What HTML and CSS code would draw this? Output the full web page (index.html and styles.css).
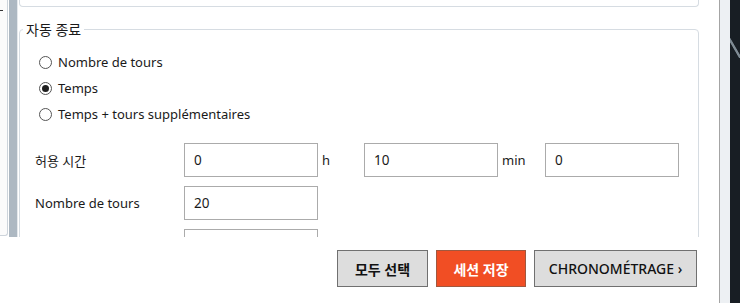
FILE: index.html
```html
<!DOCTYPE html>
<html lang="fr">
<head>
<meta charset="utf-8">
<title>Session</title>
<link rel="stylesheet" href="styles.css">
</head>
<body>
<div class="screen">
  <div class="app">
    <div class="scrollarea">
      <div class="sidepane"><span class="tick"></span></div>
      <div class="vbar"></div>
      <div class="content">
        <div class="prevbox"></div>
        <fieldset class="group">
          <legend>자동 종료</legend>
          <div class="radios">
            <label class="radio"><span class="circle"></span>Nombre de tours</label>
            <label class="radio"><span class="circle checked"></span>Temps</label>
            <label class="radio"><span class="circle"></span>Temps + tours supplémentaires</label>
          </div>
          <div class="form">
            <span class="lbl">허용 시간</span>
            <div class="cell"><input class="inp" type="text" value="0"><span class="unit">h</span></div>
            <div class="cell"><input class="inp" type="text" value="10"><span class="unit">min</span></div>
            <div class="cell"><input class="inp" type="text" value="0"></div>

            <span class="lbl">Nombre de tours</span>
            <div class="cell"><input class="inp" type="text" value="20"></div>
            <div class="cell"></div>
            <div class="cell"></div>

            <span class="lbl"></span>
            <div class="cell"><input class="inp" type="text" value=""></div>
            <div class="cell"></div>
            <div class="cell"></div>
          </div>
        </fieldset>
      </div>
    </div>
    <div class="footer">
      <button class="btn btn-gray btn-ko">모두 선택</button>
      <button class="btn btn-orange btn-ko">세션 저장</button>
      <button class="btn btn-gray btn-wide">CHRONOMÉTRAGE ›</button>
    </div>
  </div>
  <div class="divider"></div>
  <div class="strip"></div>
  <div class="dark"></div>
</div>
</body>
</html>
```

FILE: styles.css
```css
* { box-sizing: border-box; }
html, body { margin: 0; padding: 0; background: #ffffff; }
body {
  font-family: "Noto Sans", "Noto Sans CJK KR", sans-serif;
  font-size: 14px;
  color: #1a1a1a;
}
.screen {
  display: flex;
  width: 740px;
  height: 303px;
  overflow: hidden;
}
.app {
  width: 719px;
  display: flex;
  flex-direction: column;
  background: #ffffff;
}
.scrollarea {
  height: 237px;
  display: flex;
  overflow: hidden;
}
.sidepane {
  width: 8px;
  height: 236px;
  border-right: 1px solid #cdd4db;
  border-bottom: 1px solid #cdd4db;
  border-bottom-right-radius: 3px;
  background: #fbfbfb;
  padding-top: 10px;
}
.tick {
  display: block;
  width: 3px;
  height: 1px;
  background: #333;
}
.vbar {
  width: 8px;
  margin-left: 1px;
  background: #adb8c2;
}
.content {
  flex: 1;
  overflow: hidden;
  border-left: 1px solid #e4e8ec;
}
.prevbox {
  height: 7px;
  margin: 0 20px 0 1px;
  border: 1px solid #d6dce2;
  border-top: none;
  border-radius: 0 0 4px 4px;
}
.group {
  margin: 12px 20px 0 1px;
  padding: 0 0 0 3px;
  border: 1px solid #d6dce2;
  border-radius: 4px;
  min-height: 260px;
}
.group legend {
  padding: 0 3px;
  line-height: 21px;
  font-size: 14px;
}
.radios {
  margin-top: 9px;
  padding-left: 16px;
  display: flex;
  flex-direction: column;
}
.radio {
  height: 26px;
  display: flex;
  align-items: center;
  gap: 6px;
  font-size: 13px;
}
.circle {
  width: 13px;
  height: 13px;
  border: 1px solid #555;
  border-radius: 50%;
  background: #fff;
  display: flex;
  align-items: center;
  justify-content: center;
}
.circle.checked::after {
  content: "";
  width: 7px;
  height: 7px;
  border-radius: 50%;
  background: #1e1e1e;
}
.form {
  margin-top: 16px;
  padding-left: 12px;
  display: grid;
  grid-template-columns: 149px 180px 181px 134px;
  row-gap: 9px;
  align-items: center;
}
.lbl {
  font-size: 13px;
}
.cell {
  display: flex;
  align-items: center;
}
.inp {
  width: 134px;
  height: 34px;
  border: 1px solid #ababab;
  padding: 0 9px;
  font-family: inherit;
  font-size: 13.5px;
  color: #1a1a1a;
  background: #fff;
  outline: none;
}
.unit {
  margin-left: 4px;
  font-size: 13px;
}
.footer {
  flex: 1;
  display: flex;
  justify-content: flex-end;
  align-items: flex-start;
  gap: 8px;
  padding: 13px 22px 0 0;
}
.btn {
  height: 37px;
  font-family: inherit;
  font-size: 14px;
  border: 1px solid #707070;
  padding: 0;
  color: #111;
  cursor: pointer;
}
.btn-gray { background: #dddddd; }
.btn-ko { width: 90px; font-weight: 700; }
.btn-gray.btn-ko { width: 91px; }
.btn-orange {
  background: #f14e24;
  border-color: #a0583f;
  color: #ffffff;
}
.btn-wide { width: 163px; font-weight: 500; }
.divider {
  width: 1px;
  background: #a4a4a4;
}
.strip {
  width: 10px;
  background: #edf0f3;
}
.dark {
  width: 10px;
  background:
    linear-gradient(60deg, transparent 0 38%, #7e8a93 42% 50%, transparent 54%) 0 36px / 10px 22px no-repeat,
    #181e24;
}
```
